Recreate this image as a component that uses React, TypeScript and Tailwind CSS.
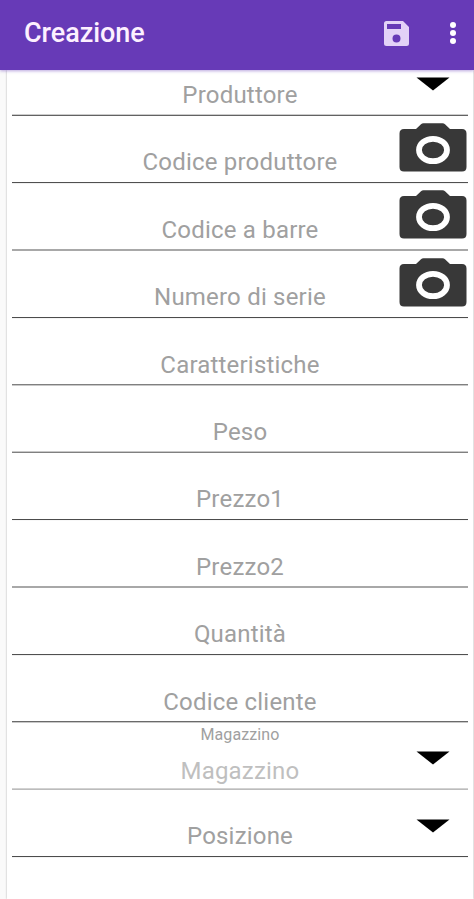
const CAMERA = "camera";
const ARROW = "arrow";

type Field = { label: string; height: string; gap: string; line: string; tail: string; icon?: string; caption?: string };

const fields: Field[] = [
  { label: "Produttore", height: "h-[45px]", gap: "mb-[5px]", line: "bg-[#cccccc]", tail: "bg-[#626262]", icon: ARROW },
  { label: "Codice produttore", height: "h-[68px]", gap: "mb-[6px]", line: "bg-[#505050]", tail: "bg-[#f0f0f0]", icon: CAMERA },
  { label: "Codice a barre", height: "h-[67px]", gap: "mb-[5px]", line: "bg-[#a8a8a8]", tail: "bg-[#a8a8a8]", icon: CAMERA },
  { label: "Numero di serie", height: "h-[68px]", gap: "mb-[6px]", line: "bg-[#4c4c4c]", tail: "bg-[#f4f4f4]", icon: CAMERA },
  { label: "Caratteristiche", height: "h-[67px]", gap: "mb-[5px]", line: "bg-[#808080]", tail: "bg-[#c8c8c8]" },
  { label: "Peso", height: "h-[67px]", gap: "mb-[5px]", line: "bg-[#c8c8c8]", tail: "bg-[#808080]" },
  { label: "Prezzo1", height: "h-[68px]", gap: "mb-[6px]", line: "bg-[#4c4c4c]", tail: "bg-[#f8f8f8]" },
  { label: "Prezzo2", height: "h-[67px]", gap: "mb-[5px]", line: "bg-[#a8a8a8]", tail: "bg-[#a8a8a8]" },
  { label: "Quantità", height: "h-[68px]", gap: "mb-[6px]", line: "bg-[#505050]", tail: "bg-[#f0f0f0]" },
  { label: "Codice cliente", height: "h-[67px]", gap: "mb-[5px]", line: "bg-[#6a6a6a]", tail: "bg-[#c8c8c8]" },
  { label: "Magazzino", height: "h-[67px]", gap: "mb-[3px]", line: "bg-[#d2d2d2]", tail: "bg-[#bcbcbc]", icon: ARROW, caption: "Magazzino" },
  { label: "Posizione", height: "h-[68px]", gap: "mb-[6px]", line: "bg-[#4c4c4c]", tail: "bg-[#f4f4f4]", icon: ARROW },
];

function Camera() {
  return (
    <svg className="absolute right-px bottom-[11px] h-[49px] w-[68px]" viewBox="0 0 68 49">
      <path d="M5 6H17L22 1.2Q23 .3 24.500 .3H43.500Q45 .3 46 1.200L51 6H63Q67.500 6 67.500 10.500V44Q67.500 48.500 63 48.500H5Q.5 48.500 .5 44V10.500Q.5 6 5 6Z" fill="#383838" />
      <ellipse cx="34" cy="27" rx="14" ry="11.200" fill="#383838" stroke="#fff" strokeWidth="5.800" />
    </svg>
  );
}

function Arrow() {
  return (
    <svg className="absolute right-[18px] bottom-[24px] h-[14px] w-[34px]" viewBox="0 0 34 14">
      <path d="M.5 .5H33.500L17 13.500Z" fill="#000" />
    </svg>
  );
}

function Row({ field }: { field: Field }) {
  return (
    <div className={`relative flex shrink-0 flex-col justify-end ${field.height}`}>
      {field.caption && (
        <span className="mb-[12px] text-center text-[16px] leading-[20px] tracking-[0.1px] text-[#a0a0a0]">{field.caption}</span>
      )}
      <span className={`text-center text-[24px] leading-[28px] tracking-[0.2px] ${field.gap} ${field.caption ? "text-[#bfbfbf]" : "text-[#a0a0a0]"}`}>
        {field.label}
      </span>
      <div className={`h-px shrink-0 ${field.line}`} />
      <div className={`-mb-px h-px shrink-0 ${field.tail}`} />
      {field.icon === CAMERA && <Camera />}
      {field.icon === ARROW && <Arrow />}
    </div>
  );
}

export default function App() {
  return (
    <div className="flex h-[899px] w-[474px] flex-col overflow-hidden bg-[#fafafa] font-['Roboto','Liberation_Sans',sans-serif]">
      <header className="relative z-10 flex h-[70px] shrink-0 items-center bg-[#673ab7] pr-[18px] pl-[24px] shadow-[0_1px_3px_rgba(103,58,183,0.45)]">
        <h1 className="flex-1 pb-[5px] text-[27px] leading-[32px] font-medium tracking-[-0.05px] text-[#fdf0ff]">Creazione</h1>
        <svg className="mr-[41px] mb-[4px] h-[25px] w-[25px]" viewBox="0 0 25 25">
          <path fillRule="evenodd" d="M2.500 0H19L25 6V22.500Q25 25 22.500 25H2.500Q0 25 0 22.500V2.500Q0 0 2.500 0ZM3 3V8H17V3ZM12.500 13.500A4 4 0 1 0 12.500 21.500A4 4 0 1 0 12.500 13.500Z" fill="#e3d2f7" />
        </svg>
        <div className="mb-[4px] flex flex-col gap-[2px]">
          <i className="h-[6px] w-[6px] rounded-full bg-white" />
          <i className="h-[6px] w-[6px] rounded-full bg-white" />
          <i className="h-[6px] w-[6px] rounded-full bg-white" />
        </div>
      </header>
      <main className="mr-px ml-[7px] flex flex-1 flex-col bg-white px-[5px] shadow-[0_0_2px_rgba(0,0,0,0.3)]">
        {fields.map((field) => (
          <Row key={field.label} field={field} />
        ))}
      </main>
    </div>
  );
}
